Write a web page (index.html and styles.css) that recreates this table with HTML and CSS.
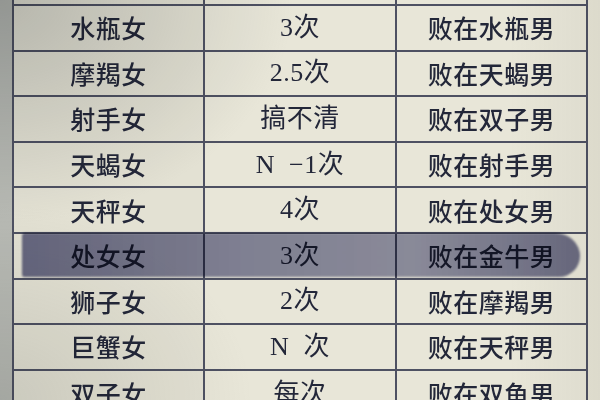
FILE: index.html
```html
<!DOCTYPE html>
<html lang="zh">
<head>
<meta charset="utf-8">
<link rel="stylesheet" href="styles.css">
</head>
<body>
<div class="page">
  <div class="strip"></div>
  <div class="sheet">
    <div class="row top"><div class="cell"></div><div class="cell"></div><div class="cell"></div></div>
    <div class="row"><div class="cell">水瓶女</div><div class="cell num">3次</div><div class="cell">败在水瓶男</div></div>
    <div class="row"><div class="cell">摩羯女</div><div class="cell num">2.5次</div><div class="cell">败在天蝎男</div></div>
    <div class="row"><div class="cell">射手女</div><div class="cell num">搞不清</div><div class="cell">败在双子男</div></div>
    <div class="row"><div class="cell">天蝎女</div><div class="cell num">N&nbsp;&nbsp;−1次</div><div class="cell">败在射手男</div></div>
    <div class="row"><div class="cell">天秤女</div><div class="cell num">4次</div><div class="cell">败在处女男</div></div>
    <div class="row"><div class="cell">处女女</div><div class="cell num">3次</div><div class="cell">败在金牛男</div></div>
    <div class="row"><div class="cell">狮子女</div><div class="cell num">2次</div><div class="cell">败在摩羯男</div></div>
    <div class="row"><div class="cell">巨蟹女</div><div class="cell num">N&nbsp;&nbsp;次</div><div class="cell">败在天秤男</div></div>
    <div class="row last"><div class="cell">双子女</div><div class="cell num">每次</div><div class="cell">败在双鱼男</div></div>
  </div>
  <div class="marker"></div>
  <div class="vignette"></div>
</div>
</body>
</html>
```
FILE: styles.css
```css
html, body {
  margin: 0;
  padding: 0;
  width: 600px;
  height: 400px;
  overflow: hidden;
}
body {
  background: #e6e4d6;
  font-family: "Noto Sans CJK SC", "Noto Sans CJK JP", sans-serif;
  color: #232739;
}
.page {
  position: relative;
  width: 600px;
  height: 400px;
  display: flex;
  overflow: hidden;
  background: #e6e4d6;
}
.strip {
  width: 12px;
  flex: none;
  background: #b8bab4;
}
.sheet {
  width: 572px;
  flex: none;
  border-left: 2px solid #4e5162;
  border-right: 2px solid #4e5162;
  display: flex;
  flex-direction: column;
}
.row {
  display: grid;
  grid-template-columns: 189px 190px 189px;
  column-gap: 2px;
  background: #4e5162;
  height: 43.6px;
  flex: none;
  border-bottom: 2px solid #4e5162;
}
.row.top { height: 4px; }
.row.last { height: 60px; }
.cell {
  display: flex;
  align-items: center;
  justify-content: center;
  font-size: 25px;
  font-weight: 500;
  line-height: 1;
  letter-spacing: 0.5px;
  background: #e8e6d8;
}
.row.last .cell { align-items: flex-start; padding-top: 10px; }
.row .cell:first-child { background: #e3e1d3; }
.num {
  font-family: "Liberation Serif", "Noto Sans CJK SC", serif;
  font-weight: 400;
  font-size: 26px;
}
.marker {
  position: absolute;
  left: 22px;
  top: 233px;
  width: 558px;
  height: 44px;
  border-radius: 3px 26px 22px 3px / 3px 24px 22px 3px;
  background: linear-gradient(90deg, rgba(60,62,112,0.72) 0%, rgba(75,78,125,0.64) 40%, rgba(82,85,130,0.6) 70%, rgba(62,64,110,0.72) 100%);
  mix-blend-mode: multiply;
  filter: blur(1.2px);
}
.vignette {
  position: absolute;
  inset: 0;
  pointer-events: none;
  background:
    radial-gradient(ellipse 70% 80% at 0% 0%, rgba(110,115,120,0.35), rgba(110,115,120,0) 70%),
    radial-gradient(ellipse 60% 70% at 0% 100%, rgba(120,125,125,0.2), rgba(120,125,125,0) 70%),
    linear-gradient(90deg, rgba(0,0,0,0) 85%, rgba(120,120,110,0.08) 100%);
  mix-blend-mode: multiply;
}
```
